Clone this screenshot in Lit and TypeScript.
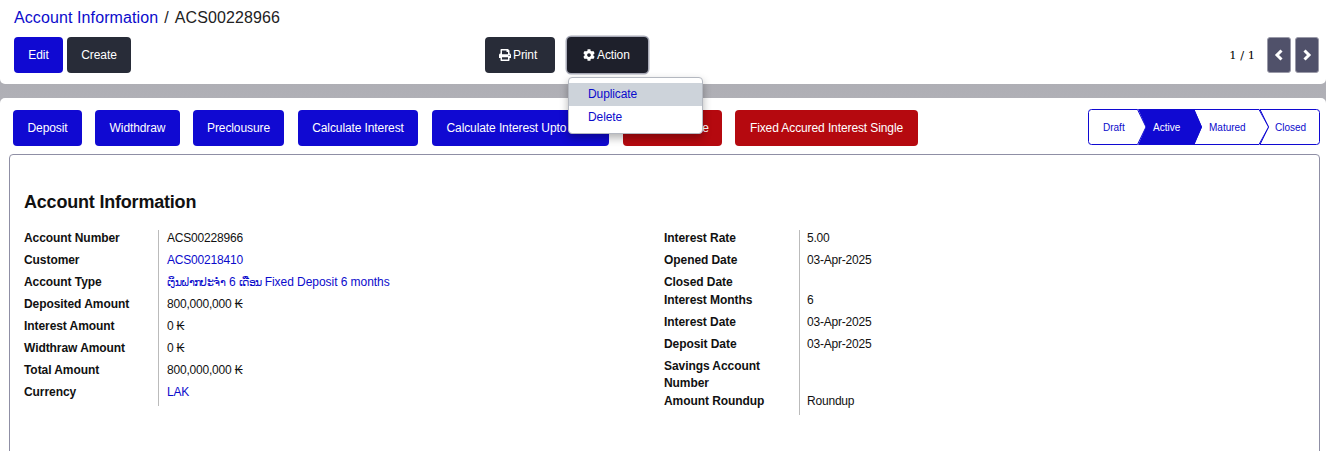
import { LitElement, html, css, svg } from "lit";
import { customElement } from "lit/decorators.js";

type Row = { label: string; value?: string; link?: boolean; parts?: { t: string; lao?: boolean }[] };

const leftRows: Row[] = [
  { label: "Account Number", value: "ACS00228966" },
  { label: "Customer", value: "ACS00218410", link: true },
  {
    label: "Account Type",
    link: true,
    parts: [
      { t: "ເງິນຝາກປະຈຳ", lao: true },
      { t: " 6 " },
      { t: "ເດືອນ", lao: true },
      { t: " Fixed Deposit 6 months" },
    ],
  },
  { label: "Deposited Amount", value: "800,000,000 ₭" },
  { label: "Interest Amount", value: "0 ₭" },
  { label: "Widthraw Amount", value: "0 ₭" },
  { label: "Total Amount", value: "800,000,000 ₭" },
  { label: "Currency", value: "LAK", link: true },
];
const rightRows: Row[] = [
  { label: "Interest Rate", value: "5.00" },
  { label: "Opened Date", value: "03-Apr-2025" },
  { label: "Closed Date" },
  { label: "Interest Months", value: "6" },
  { label: "Interest Date", value: "03-Apr-2025" },
  { label: "Deposit Date", value: "03-Apr-2025" },
  { label: "Savings Account Number" },
  { label: "Amount Roundup", value: "Roundup" },
];

const printIcon = svg`<path d="M448 192V77.25c0-8.49-3.37-16.62-9.37-22.63L393.37 9.37c-6-6-14.14-9.37-22.63-9.37H96C78.33 0 64 14.33 64 32v160c-35.35 0-64 28.65-64 64v112c0 8.84 7.16 16 16 16h48v96c0 17.67 14.33 32 32 32h320c17.67 0 32-14.33 32-32v-96h48c8.84 0 16-7.16 16-16V256c0-35.35-28.65-64-64-64zm-64 256H128v-96h256v96zm0-224H128V64h192v48c0 8.84 7.16 16 16 16h48v96zm48 72c-13.25 0-24-10.75-24-24 0-13.26 10.75-24 24-24s24 10.74 24 24c0 13.25-10.75 24-24 24z"/>`;
const cogIcon = svg`<path d="M487.4 315.7l-42.6-24.6c4.3-23.2 4.3-47 0-70.2l42.6-24.6c4.9-2.8 7.1-8.6 5.5-14-11.1-35.6-30-67.8-54.7-94.6-3.8-4.1-10-5.1-14.8-2.3L380.8 110c-17.9-15.4-38.5-27.3-60.8-35.1V25.8c0-5.6-3.9-10.5-9.4-11.7-36.7-8.2-74.3-7.8-109.2 0-5.5 1.2-9.4 6.1-9.4 11.7V75c-22.2 7.9-42.8 19.8-60.8 35.1L88.7 85.5c-4.9-2.8-11-1.9-14.8 2.3-24.7 26.7-43.6 58.9-54.7 94.6-1.7 5.4.6 11.2 5.5 14L67.3 221c-4.3 23.2-4.3 47 0 70.2l-42.6 24.6c-4.9 2.8-7.1 8.6-5.5 14 11.1 35.6 30 67.8 54.7 94.6 3.8 4.1 10 5.1 14.8 2.3l42.6-24.6c17.9 15.4 38.5 27.3 60.8 35.1v49.2c0 5.6 3.9 10.5 9.4 11.7 36.7 8.2 74.3 7.8 109.2 0 5.5-1.2 9.4-6.1 9.4-11.7v-49.2c22.2-7.9 42.8-19.8 60.8-35.1l42.6 24.6c4.9 2.8 11 1.9 14.8-2.3 24.7-26.7 43.6-58.9 54.7-94.6 1.5-5.5-.7-11.3-5.6-14.1zM256 336c-44.1 0-80-35.9-80-80s35.9-80 80-80 80 35.9 80 80-35.9 80-80 80z"/>`;

@customElement("app-root")
export class AppRoot extends LitElement {
  static styles = css`
    :host {
      display: flex;
      flex-direction: column;
      height: 451px;
      overflow: hidden;
      background: linear-gradient(#a6a6ad 0, #b0b0b6 98px);
      font-family: "Liberation Sans", Arial, sans-serif;
      font-size: 12px;
      color: #111;
    }
    a { color: #0b0bcc; text-decoration: none; }
    .top {
      flex: none;
      height: 84px;
      box-sizing: border-box;
      background: #fff;
      border-radius: 0 0 5px 5px;
      padding: 8px 7px 0 14px;
    }
    .crumb {
      font-size: 16px;
      letter-spacing: 0.1px;
      line-height: 19px;
      color: #222;
      height: 29px;
      display: flex;
      gap: 6px;
    }
    .toolbar { display: flex; align-items: flex-start; }
    .left { display: flex; gap: 4px; width: 471px; }
    .center { display: flex; gap: 12px; }
    .right {
      flex: 1;
      display: flex;
      justify-content: flex-end;
      align-items: center;
      gap: 12px;
    }
    .btn {
      box-sizing: border-box;
      height: 36px;
      display: inline-flex;
      align-items: center;
      justify-content: center;
      padding: 0;
      border-radius: 4px;
      color: #fff;
      font-size: 12px;
      letter-spacing: -0.1px;
      white-space: nowrap;
    }
    .btn svg { width: 12px; height: 12px; fill: #fff; flex: none; }
    .blue { background: #1009d2; }
    .dark { background: #282c38; }
    .red { background: #b5090f; }
    .edit { width: 49px; }
    .create { width: 64px; }
    .print { width: 70px; justify-content: flex-start; padding-left: 14px; gap: 2px; }
    .action-wrap { position: relative; }
    .action {
      width: 81px;
      justify-content: flex-start;
      padding-left: 16px;
      gap: 2px;
      background: #1e202b;
      box-shadow: 0 0 0 1.5px #a9abb8;
    }
    .menu {
      position: absolute;
      left: 1px;
      top: 40px;
      width: 135px;
      height: 57px;
      box-sizing: border-box;
      padding-top: 5px;
      background: #fff;
      border: 1px solid #b4b8c0;
      border-radius: 4px;
      box-shadow: 0 4px 8px rgba(0, 0, 0, 0.3);
      z-index: 5;
      letter-spacing: -0.1px;
    }
    .menu a {
      display: block;
      height: 23px;
      line-height: 23px;
      padding-left: 19px;
    }
    .menu a.hover { background: #cdd3da; }
    .pager { display: flex; align-items: center; gap: 4px; }
    .count {
      font-family: "DejaVu Serif", serif;
      font-size: 11.5px;
      color: #000;
    }
    .page {
      box-sizing: border-box;
      width: 24px;
      height: 36px;
      background: #50516a;
      border: 1px solid #9a9aa8;
      border-radius: 3px;
      display: flex;
      align-items: center;
      justify-content: center;
    }
    .page svg { width: 10px; height: 12px; fill: none; stroke: #fff; stroke-width: 3; }
    .panel {
      flex: none;
      margin-top: 14px;
      height: 353px;
      background: #fff;
      border-radius: 5px 5px 0 0;
      padding: 12px 6px 0 9px;
    }
    .actions {
      display: flex;
      align-items: flex-start;
      height: 44px;
      padding-left: 4px;
    }
    .a1 { width: 69px; margin-right: 13px; }
    .a2 { width: 85px; margin-right: 13px; }
    .a3 { width: 91px; margin-right: 14px; }
    .a4 { width: 120px; margin-right: 14px; }
    .a5 { width: 177px; margin-right: 14px; }
    .a6 { width: 99px; margin-right: 13px; }
    .a7 { width: 183px; }
    .pipeline {
      position: relative;
      width: 232px;
      height: 36px;
      margin-left: auto;
      margin-top: -1px;
      font-size: 10px;
      line-height: 37px;
      color: #0b0bcc;
    }
    .pipeline svg { position: absolute; inset: 0; width: 232px; height: 36px; }
    .pipeline span { position: absolute; top: 0; }
    .pipeline .on { color: #fff; }
    .card {
      box-sizing: border-box;
      height: 340px;
      border: 1px solid #8f8fa5;
      border-radius: 4px;
      padding: 36px 14px 0;
    }
    h2 {
      margin: 0 0 17px;
      font-size: 18px;
      letter-spacing: -0.2px;
      line-height: 22px;
      font-weight: 700;
      color: #111;
    }
    .cols { display: flex; }
    .col { width: 640px; }
    .row { display: flex; line-height: 17px; }
    .label {
      font-weight: 700;
      letter-spacing: -0.07px;
      padding-bottom: 1px;
      box-sizing: border-box;
      width: 134px;
    }
    .col.r .label { width: 135px; padding-right: 30px; }
    .value {
      border-left: 1px solid #bbb;
      padding: 0 0 5px 8px;
      flex: 1;
      letter-spacing: -0.2px;
    }
    .col.r .value { padding-left: 7px; }
    .lao { font-size: 10.5px; letter-spacing: -0.6px; }
    .latin { letter-spacing: -0.05px; }
  `;

  private rows(rows: Row[]) {
    return rows.map(
      (r) => html`<div class="row">
        <div class="label">${r.label}</div>
        <div class="value">${r.link
          ? html`<a href="#">${r.parts
              ? r.parts.map((p) =>
                  p.lao ? html`<span class="lao">${p.t}</span>` : html`<span class="latin">${p.t}</span>`
                )
              : r.value}</a>`
          : r.value ?? ""}</div>
      </div>`
    );
  }

  render() {
    return html`
      <div class="top">
        <div class="crumb"><a href="#">Account Information</a><span>/</span><span>ACS00228966</span></div>
        <div class="toolbar">
          <div class="left">
            <div class="btn blue edit">Edit</div>
            <div class="btn dark create">Create</div>
          </div>
          <div class="center">
            <div class="btn dark print"><svg viewBox="0 0 512 512">${printIcon}</svg>Print</div>
            <div class="action-wrap">
              <div class="btn action"><svg viewBox="0 0 512 512">${cogIcon}</svg>Action</div>
              <div class="menu">
                <a class="hover" href="#">Duplicate</a>
                <a href="#">Delete</a>
              </div>
            </div>
          </div>
          <div class="right">
            <span class="count">1 / 1</span>
            <div class="pager">
              <div class="page"><svg viewBox="0 0 10 12"><polyline points="7.5,1.5 3,6 7.5,10.5"></polyline></svg></div>
              <div class="page"><svg viewBox="0 0 10 12"><polyline points="2.5,1.5 7,6 2.5,10.5"></polyline></svg></div>
            </div>
          </div>
        </div>
      </div>
      <div class="panel">
        <div class="actions">
          <div class="btn blue a1">Deposit</div>
          <div class="btn blue a2">Widthdraw</div>
          <div class="btn blue a3">Preclousure</div>
          <div class="btn blue a4">Calculate Interest</div>
          <div class="btn blue a5">Calculate Interest Upto Date</div>
          <div class="btn red a6">Fixed Closure</div>
          <div class="btn red a7">Fixed Accured Interest Single</div>
          <div class="pipeline">
            <svg viewBox="0 0 232 36">
              <path d="M3.5 .5H49.5L58 18 49.5 35.5H3.5A3 3 0 0 1 .5 32.5V3.5A3 3 0 0 1 3.5 .5Z" fill="#fff" stroke="#1009d2"></path>
              <path d="M172 .5H228.5A3 3 0 0 1 231.5 3.5V32.5A3 3 0 0 1 228.5 35.5H172L180.5 18Z" fill="#fff" stroke="#1009d2"></path>
              <path d="M106 .5H171L180.5 18 171 35.5H106L113.5 18Z" fill="#fff" stroke="#1009d2"></path>
              <path d="M50 0H106L114 18 106 36H50L58 18Z" fill="#1009d2"></path>
            </svg>
            <span style="left:15px">Draft</span>
            <span class="on" style="left:65px">Active</span>
            <span style="left:121px">Matured</span>
            <span style="left:187px">Closed</span>
          </div>
        </div>
        <div class="card">
          <h2>Account Information</h2>
          <div class="cols">
            <div class="col">${this.rows(leftRows)}</div>
            <div class="col r">${this.rows(rightRows)}</div>
          </div>
        </div>
      </div>
    `;
  }
}
